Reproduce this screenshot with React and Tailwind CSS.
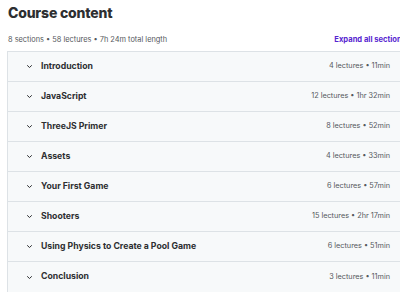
const sections = [
  { title: 'Introduction', meta: '4 lectures • 11min' },
  { title: 'JavaScript', meta: '12 lectures • 1hr 32min' },
  { title: 'ThreeJS Primer', meta: '8 lectures • 52min' },
  { title: 'Assets', meta: '4 lectures • 33min' },
  { title: 'Your First Game', meta: '6 lectures • 57min' },
  { title: 'Shooters', meta: '15 lectures • 2hr 17min' },
  { title: 'Using Physics to Create a Pool Game', meta: '6 lectures • 51min' },
  { title: 'Conclusion', meta: '3 lectures • 11min' },
]

function Chevron() {
  return (
    <svg width="7" height="5" viewBox="0 0 7 5" fill="none" className="shrink-0">
      <path d="M1.2 1.3 L3.5 3.5 L5.8 1.3" stroke="#2d2f31" strokeWidth="1" />
    </svg>
  )
}

export default function App() {
  return (
    <div className="h-[292px] w-[400px] overflow-hidden bg-white font-['Inter',sans-serif] text-[#2d2f31]">
      <div className="w-[406px] pl-[7px]">
        <h2 className="pl-px pt-[3px] text-[14px] font-extrabold leading-[20px] tracking-[-0.2px]">
          Course content
        </h2>
        <div className="mt-[11px] flex items-center justify-between pl-px text-[7.4px] leading-[12px]">
          <span className="text-[#55585c]">8 sections • 58 lectures • 7h 24m total length</span>
          <span className="text-[7.6px] font-bold text-[#5624d0]">Expand all sections</span>
        </div>
        <div className="mt-[5px] border border-[#dde2e6]">
          {sections.map((s, i) => (
            <div
              key={s.title}
              className={`flex h-[30px] items-center bg-[#f7f9fa] pl-[18px] pr-[15px] ${i < sections.length - 1 ? 'border-b border-[#dde2e6]' : ''}`}
            >
              <Chevron />
              <span className="ml-[8px] flex-1 text-[8.7px] font-bold">{s.title}</span>
              <span className="text-[7.3px] text-[#55585c]">{s.meta}</span>
            </div>
          ))}
        </div>
      </div>
    </div>
  )
}
